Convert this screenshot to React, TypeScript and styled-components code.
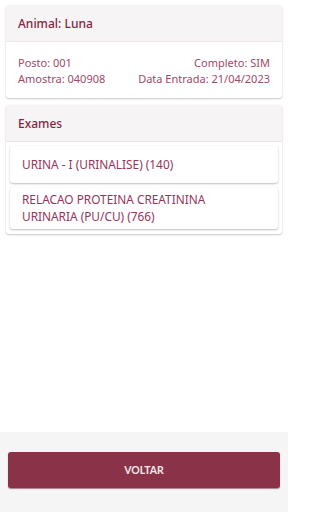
import React from 'react';
import styled, { createGlobalStyle } from 'styled-components';

const GlobalStyle = createGlobalStyle`
  html, body {
    margin: 0;
    padding: 0;
    background: #ffffff;
  }
  * {
    box-sizing: border-box;
  }
`;

type Exame = { nome: string; codigo: number };

const exames: Exame[] = [
  { nome: 'URINA - I (URINALISE)', codigo: 140 },
  { nome: 'RELACAO PROTEINA CREATININA URINARIA (PU/CU)', codigo: 766 },
];

export default function App() {
  return (
    <>
      <GlobalStyle />
      <Page>
        <Content>
          <Card>
            <CardHeader>Animal: Luna</CardHeader>
            <InfoBody>
              <InfoRow>
                <InfoText>Posto: 001</InfoText>
                <InfoText>Completo: SIM</InfoText>
              </InfoRow>
              <InfoRow>
                <InfoText>Amostra: 040908</InfoText>
                <InfoText>Data Entrada: 21/04/2023</InfoText>
              </InfoRow>
            </InfoBody>
          </Card>

          <Card>
            <CardHeader>Exames</CardHeader>
            <ExameList>
              {exames.map((exame) => (
                <ExameItem key={exame.codigo}>
                  <span>
                    {exame.nome} ({exame.codigo})
                  </span>
                </ExameItem>
              ))}
            </ExameList>
          </Card>
        </Content>

        <Footer>
          <BackButton type="button">VOLTAR</BackButton>
        </Footer>
      </Page>
    </>
  );
}

const Page = styled.div`
  display: flex;
  flex-direction: column;
  width: 288px;
  height: 512px;
  font-family: 'Noto Sans', 'Open Sans', sans-serif;
`;

const Content = styled.div`
  flex: 1;
  display: flex;
  flex-direction: column;
  gap: 7px;
  padding: 5px 6px;
`;

const Card = styled.div`
  background: #ffffff;
  border-radius: 3px;
  box-shadow: 0 1px 2px rgba(0, 0, 0, 0.22), 0 0 1px rgba(0, 0, 0, 0.1);
  overflow: hidden;
`;

const CardHeader = styled.div`
  height: 37px;
  display: flex;
  align-items: center;
  padding: 1px 12px 0;
  background: #f7f4f5;
  border-bottom: 1px solid #ece6e8;
  color: #87253f;
  font-size: 12px;
  font-weight: 500;
`;

const InfoBody = styled.div`
  display: flex;
  flex-direction: column;
  padding: 13px 12px 11px;
`;

const InfoRow = styled.div`
  display: flex;
  justify-content: space-between;
`;

const InfoText = styled.span`
  color: #a04a66;
  font-size: 11px;
  line-height: 16px;
`;

const ExameList = styled.div`
  display: flex;
  flex-direction: column;
  gap: 4px;
  padding: 4px 4px 5px;
`;

const ExameItem = styled.div`
  display: flex;
  align-items: center;
  min-height: 37px;
  background: #ffffff;
  border-radius: 3px;
  box-shadow: 0 1px 2px rgba(0, 0, 0, 0.25), 0 0 1px rgba(0, 0, 0, 0.1);
  padding: 4px 24px 4px 12px;
  color: #96345a;
  font-size: 11.85px;
  line-height: 17px;
`;

const Footer = styled.div`
  height: 80px;
  background: #f5f5f5;
  padding: 20px 8px 0;
`;

const BackButton = styled.button`
  display: block;
  width: 100%;
  height: 36px;
  border: none;
  border-radius: 3px;
  background: #8a3348;
  box-shadow: 0 1px 1px rgba(100, 0, 30, 0.5);
  color: #f4e8ec;
  font-family: 'Lato', 'Noto Sans', sans-serif;
  font-size: 10.5px;
  font-weight: 700;
`;
